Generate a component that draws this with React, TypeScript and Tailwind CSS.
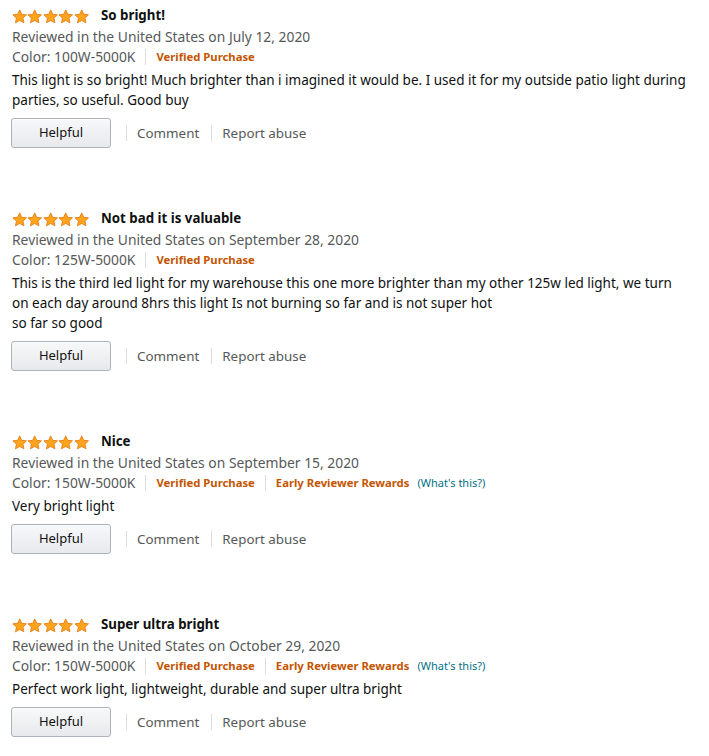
import React from "react";

type Review = {
  title: string;
  date: string;
  color: string;
  early: boolean;
  body: string[];
};

const reviews: Review[] = [
  {
    title: "So bright!",
    date: "July 12, 2020",
    color: "100W-5000K",
    early: false,
    body: [
      "This light is so bright! Much brighter than i imagined it would be. I used it for my outside patio light during",
      "parties, so useful. Good buy",
    ],
  },
  {
    title: "Not bad it is valuable",
    date: "September 28, 2020",
    color: "125W-5000K",
    early: false,
    body: [
      "This is the third led light for my warehouse this one more brighter than my other 125w led light, we turn",
      "on each day around 8hrs this light Is not burning so far and is not super hot",
      "so far so good",
    ],
  },
  {
    title: "Nice",
    date: "September 15, 2020",
    color: "150W-5000K",
    early: true,
    body: ["Very bright light"],
  },
  {
    title: "Super ultra bright",
    date: "October 29, 2020",
    color: "150W-5000K",
    early: true,
    body: ["Perfect work light, lightweight, durable and super ultra bright"],
  },
];

function Star() {
  return (
    <svg width="15.4" height="15" viewBox="0 0 24 23" className="block">
      <path
        d="M12 1.2l3.2 6.9 7.4.8-5.5 5.1 1.5 7.4L12 17.7l-6.6 3.7 1.5-7.4L1.4 8.9l7.4-.8z"
        fill="#FFA41C"
        stroke="#E47911"
        strokeWidth="1.3"
        strokeLinejoin="round"
      />
    </svg>
  );
}

function ReviewItem({ r }: { r: Review }) {
  return (
    <div className="flex flex-col">
      <div className="flex items-center h-[20px] mt-[1px]">
        <div className="flex mr-[12px]">
          <Star />
          <Star />
          <Star />
          <Star />
          <Star />
        </div>
        <span className="text-[13.3px] font-bold text-[#0F1111]">{r.title}</span>
      </div>
      <div className="text-[13.85px] leading-[20px] text-[#565959] mt-[1px]">
        Reviewed in the United States on {r.date}
      </div>
      <div className="flex items-center text-[13.85px] leading-[20px] text-[#565959]">
        <span>Color: {r.color}</span>
        <span className="mx-[10px] h-[16px] w-px bg-[#DDDDDD]" />
        <span className="text-[11.3px] font-bold text-[#C45500]">Verified Purchase</span>
        {r.early && (
          <>
            <span className="mx-[10px] h-[16px] w-px bg-[#DDDDDD]" />
            <span className="text-[11.3px] font-bold text-[#C45500]">Early Reviewer Rewards</span>
            <span className="ml-[8px] text-[11px] text-[#007185]">(What's this?)</span>
          </>
        )}
      </div>
      <div className="text-[13.5px] leading-[20px] text-[#0F1111] mt-[3px]">
        {r.body.map((b, i) => (
          <div key={i} className="whitespace-nowrap">
            {b}
          </div>
        ))}
      </div>
      <div className="flex items-center mt-[8px] h-[30px]">
        <button className="-ml-px w-[100px] h-[30px] rounded-[3px] border border-[#ADB1B8] bg-gradient-to-b from-[#F7F8FA] to-[#E7E9EC] text-[13px] text-[#111111] shadow-[0_1px_0_rgba(255,255,255,0.6)_inset]">
          Helpful
        </button>
        <span className="ml-[15px] h-[16px] w-px bg-[#DDDDDD]" />
        <span className="ml-[10px] text-[13.4px] text-[#565959]">Comment</span>
        <span className="ml-[12px] h-[16px] w-px bg-[#DDDDDD]" />
        <span className="ml-[10px] text-[13.4px] text-[#565959]">Report abuse</span>
      </div>
    </div>
  );
}

export default function App() {
  return (
    <div
      className="w-[709px] h-[756px] bg-white px-[12px] pt-[5px] flex flex-col gap-[60px] overflow-hidden"
      style={{ fontFamily: '"Noto Sans", "Open Sans", Arial, sans-serif' }}
    >
      {reviews.map((r, i) => (
        <ReviewItem key={i} r={r} />
      ))}
    </div>
  );
}
